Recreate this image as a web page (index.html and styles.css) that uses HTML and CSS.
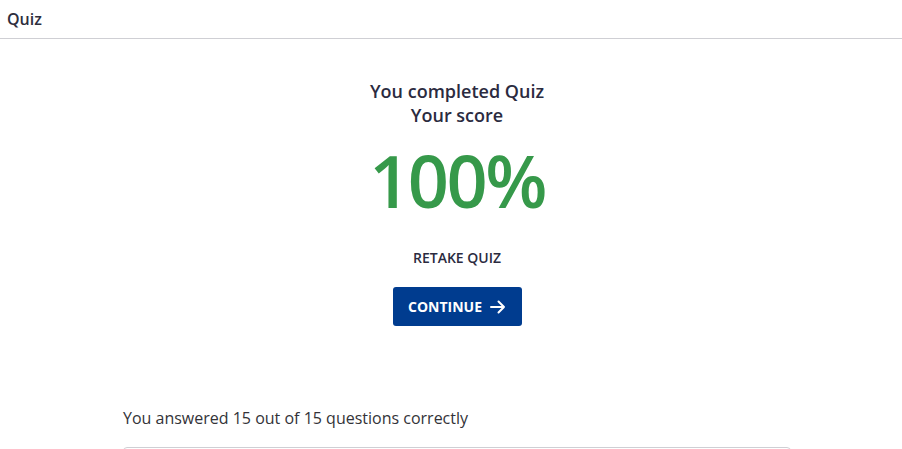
FILE: index.html
```html
<!DOCTYPE html>
<html>
<head>
<meta charset="utf-8">
<link rel="stylesheet" href="styles.css">
</head>
<body>
<header class="topbar"><span class="title">Quiz</span></header>
<main class="main">
  <section class="result">
    <div class="heading">You completed Quiz<br>Your score</div>
    <div class="score">100%</div>
    <div class="retake">RETAKE QUIZ</div>
    <button class="continue">CONTINUE
      <svg class="arrow" width="16" height="14" viewBox="0 0 16 14"><path d="M1 7h13M8.5 1.5L14 7l-5.5 5.5" fill="none" stroke="#fff" stroke-width="2" stroke-linecap="round" stroke-linejoin="round"/></svg>
    </button>
  </section>
  <section class="summary">
    <p class="answered">You answered 15 out of 15 questions correctly</p>
    <div class="list"></div>
  </section>
</main>
</body>
</html>
```
FILE: styles.css
```css
* { box-sizing: border-box; }
html, body { margin: 0; padding: 0; background: #fff; }
body { font-family: "Open Sans", "Liberation Sans", sans-serif; color: #2e2e3e; overflow: hidden; height: 449px; }
.topbar { height: 39px; border-bottom: 1px solid #cfcfd4; display: flex; align-items: center; padding-left: 7px; }
.title { font-size: 16px; font-weight: 600; color: #2e2e3e; }
.main { padding-left: 12px; }
.result { display: flex; flex-direction: column; align-items: center; padding-top: 40px; }
.heading { font-size: 18px; font-weight: 600; line-height: 24px; text-align: center; color: #2b2b3f; }
.score { font-size: 72px; font-weight: 600; color: #36994a; line-height: 100px; margin-top: 3px; letter-spacing: -2.5px; }
.retake { font-size: 14px; font-weight: 600; color: #2b2b3f; margin-top: 18px; line-height: 20px; }
.continue { margin-top: 19px; width: 129px; height: 39px; background: #003c8f; border: none; border-radius: 3px; color: #fff; font-family: inherit; font-size: 14px; font-weight: 700; display: flex; align-items: center; justify-content: center; gap: 8px; padding: 0; }
.summary { width: 668px; margin: 80px auto 0; }
.answered { margin: 0; font-size: 16px; color: #333338; line-height: 24px; }
.list { margin-top: 17px; height: 20px; border: 1px solid #cfcfd4; border-radius: 4px; }
```
